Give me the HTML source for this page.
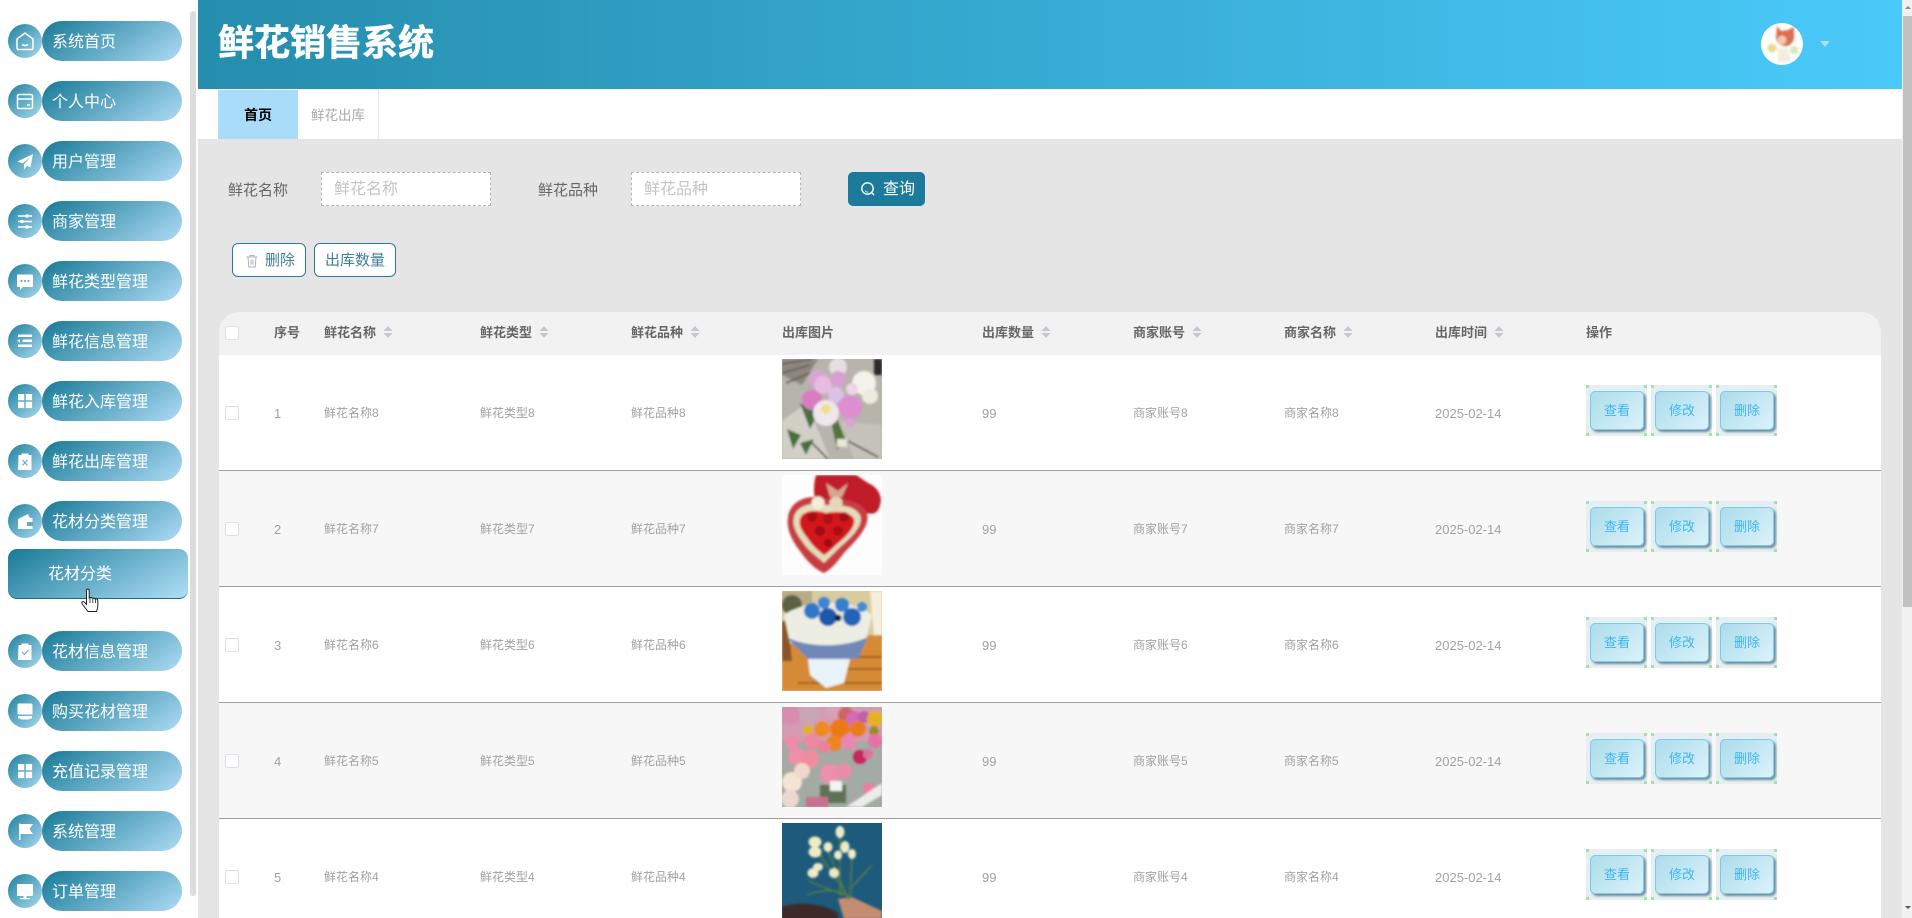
<!DOCTYPE html>
<html lang="zh"><head><meta charset="utf-8"><title>鲜花销售系统</title>
<style>
*{box-sizing:border-box;margin:0;padding:0}
html,body{width:1912px;height:918px;overflow:hidden;background:#fff;font-family:"Liberation Sans","Noto Sans CJK SC",sans-serif}
#root{position:relative;width:1912px;height:918px;overflow:hidden;background:#fff}
.a{position:absolute}
.ci{position:absolute;left:8px;width:34px;height:34px;border-radius:50%;background:linear-gradient(135deg,#20809c,#a8d8f0)}
.ci svg{display:block;width:34px;height:34px}
.p{position:absolute;left:42px;width:140px;height:40px;border-radius:20px;background:linear-gradient(145deg,#1f7f9b 5%,#a6d6f0 95%);color:#fff;font-size:16px;line-height:43px;padding-left:10px;white-space:nowrap;overflow:hidden}
.r{position:absolute;left:219px;width:1662px;height:116px;border-bottom:1px solid #a0a0a0;background:#fff;overflow:hidden}
.r.e{background:#f7f7f7}
.t{position:absolute;font-size:12px;line-height:117px;color:#a2a2a2;white-space:nowrap;top:0}
.n{font-size:13px}
.h{position:absolute;top:312px;font-size:13px;font-weight:bold;line-height:41px;color:#666;white-space:nowrap}
.s{position:absolute;top:325px;width:10px;height:14px}
.cb{position:absolute;width:14px;height:14px;border:1px solid #dcdfe6;background:#fff;border-radius:2px;left:6px;top:51px}
.o{position:absolute;top:30px;width:61px;height:51px;background:
linear-gradient(#9fe0b5,#9fe0b5) 0 0/3px 3px no-repeat,linear-gradient(#9fe0b5,#9fe0b5) 100% 0/3px 3px no-repeat,
linear-gradient(#9fe0b5,#9fe0b5) 0 100%/3px 3px no-repeat,linear-gradient(#9fe0b5,#9fe0b5) 100% 100%/3px 3px no-repeat,#e6eef1}
.o div{position:absolute;left:4px;top:6px;width:54px;height:39px;border-radius:5px;border:1px solid #74cdee;background:linear-gradient(135deg,#acdcec,#dcf2f9);box-shadow:2px 2px 2px #6f8c9b;color:#3fb6f0;font-size:13px;line-height:38px;text-align:center}
.im{position:absolute;left:563px;top:4px;width:100px;height:100px;overflow:hidden}
.im svg{display:block;width:100px;height:100px}
.b{filter:url(#bl)}
</style></head><body><div id="root">
<svg width="0" height="0" style="position:absolute"><defs><filter id="bl" x="-5%" y="-5%" width="110%" height="110%"><feGaussianBlur stdDeviation="1.1"/></filter>
<symbol id="sort" viewBox="0 0 10 14"><path d="M5 1 9.500 6H.5zM5 13 .5 8h9z" fill="#c4c7cd"/></symbol>
<symbol id="grid" viewBox="0 0 34 34"><path d="M10 10h6.300v6.300H10zM17.800 10h6.300v6.300h-6.300zM10 17.800h6.300v6.300H10zM17.800 17.800h6.300v6.300h-6.300z" fill="#fff"/></symbol>
</defs></svg>

<!-- sidebar -->
<div class="a" style="left:190px;top:11px;width:6px;height:885px;background:#dcdcde;border-radius:3px"></div>

<div class="ci" style="top:24px"><svg viewBox="0 0 34 34"><path d="M17 9 25 15V24a1.500 1.500 0 0 1-1.500 1.500h-13A1.500 1.500 0 0 1 9 24V15z" fill="none" stroke="#fff" stroke-width="1.500" stroke-linejoin="round"/><path d="M14 20.500q3 2 6 0" fill="none" stroke="#fff" stroke-width="1.500"/></svg></div><div class="p" style="top:21px">系统首页</div>
<div class="ci" style="top:84px"><svg viewBox="0 0 34 34"><rect x="9.500" y="10.500" width="15" height="14" rx="1.500" fill="none" stroke="#fff" stroke-width="1.500"/><path d="M9.500 15h15M19 21h3" stroke="#fff" stroke-width="1.500"/></svg></div><div class="p" style="top:81px">个人中心</div>
<div class="ci" style="top:144px"><svg viewBox="0 0 34 34"><path d="M25 10 9.500 17.500 14.500 19.500 22 13.500 16 20.500 16 25.500 19 22 22.500 23.500z" fill="#fff"/></svg></div><div class="p" style="top:141px">用户管理</div>
<div class="ci" style="top:204px"><svg viewBox="0 0 34 34"><path d="M10 12h14M10 17.500h14M10 23h14" stroke="#fff" stroke-width="1.500"/><circle cx="19" cy="12" r="1.800" fill="#fff"/><circle cx="14" cy="17.500" r="1.800" fill="#fff"/><circle cx="19" cy="23" r="1.800" fill="#fff"/></svg></div><div class="p" style="top:201px">商家管理</div>
<div class="ci" style="top:264px"><svg viewBox="0 0 34 34"><path d="M10 10.500h14a1 1 0 0 1 1 1V22a1 1 0 0 1-1 1H15l-3 3v-3h-2a1 1 0 0 1-1-1V11.500a1 1 0 0 1 1-1z" fill="#fff"/><circle cx="13.500" cy="17" r="1" fill="#4f9cb8"/><circle cx="17" cy="17" r="1" fill="#4f9cb8"/><circle cx="20.500" cy="17" r="1" fill="#4f9cb8"/></svg></div><div class="p" style="top:261px">鲜花类型管理</div>
<div class="ci" style="top:324px"><svg viewBox="0 0 34 34"><path d="M10 10.500h14v2.500H10zM14.500 15.500H24V18h-9.500zM10 20.500h14V23H10zM9 16.800l3-1.800v3.600z" fill="#fff"/></svg></div><div class="p" style="top:321px">鲜花信息管理</div>
<div class="ci" style="top:384px"><svg viewBox="0 0 34 34"><use href="#grid"/></svg></div><div class="p" style="top:381px">鲜花入库管理</div>
<div class="ci" style="top:444px"><svg viewBox="0 0 34 34"><path d="M10.500 11h3V9.500h7V11h3v15h-13.500z" fill="#fff"/><path d="M14.500 16l5 5.500M19.500 16l-5 5.500" stroke="#6aa6bf" stroke-width="1"/></svg></div><div class="p" style="top:441px">鲜花出库管理</div>
<div class="ci" style="top:504px"><svg viewBox="0 0 34 34"><path d="M10 15l10-5 2 4h2.500v11H10z" fill="#fff"/><path d="M19 18h6v4h-6z" fill="#6aa6bf"/></svg></div><div class="p" style="top:501px">花材分类管理</div>
<div class="a" style="left:8px;top:549px;width:180px;height:50px;border-radius:9px;background:linear-gradient(150deg,#1f7f9b 5%,#a8d9f2 95%);border-bottom:1px solid #1c6a84;color:#fff;font-size:16px;line-height:51px;padding-left:40px">花材分类</div>

<div class="ci" style="top:634px"><svg viewBox="0 0 34 34"><path d="M10.500 11h3V9.500h7V11h3v15h-13.500z" fill="#fff"/><path d="M14 18l2.500 2.500 4-4.500" fill="none" stroke="#6aa6bf" stroke-width="1"/></svg></div><div class="p" style="top:631px">花材信息管理</div>
<div class="ci" style="top:694px"><svg viewBox="0 0 34 34"><path d="M11 9.500h12a1.500 1.500 0 0 1 1.500 1.500v9.500h-15V11A1.500 1.500 0 0 1 11 9.500zM10 22h14v2.500h-14zM12.500 24h9v1.500h-9z" fill="#fff"/></svg></div><div class="p" style="top:691px">购买花材管理</div>
<div class="ci" style="top:754px"><svg viewBox="0 0 34 34"><use href="#grid"/></svg></div><div class="p" style="top:751px">充值记录管理</div>
<div class="ci" style="top:814px"><svg viewBox="0 0 34 34"><path d="M11 9.500h1.500V26H11zM12.500 10H25l-3.500 5 3.500 5H12.500z" fill="#fff"/></svg></div><div class="p" style="top:811px">系统管理</div>
<div class="ci" style="top:874px"><svg viewBox="0 0 34 34"><path d="M10 10h14a1 1 0 0 1 1 1v10a1 1 0 0 1-1 1H10a1 1 0 0 1-1-1V11a1 1 0 0 1 1-1zM15.500 22h3v2h3.500v1.300H12v-1.300h3.500z" fill="#fff"/></svg></div><div class="p" style="top:871px">订单管理</div>

<!-- cursor -->
<svg class="a" style="left:80px;top:588px" width="20" height="26" viewBox="0 0 20 26"><path d="M6.500 2.500c0-1.800 2.700-1.800 2.700 0V10l1-.4c.7-.3 1.500 0 1.800.5l1.300-.1c.7 0 1.200.3 1.500.8l1-.1c1.300 0 2 1 2 2.200V18c0 2.500-.6 3.500-1.300 5.500H8L3 17c-1-1.300-1.500-2.400-1-3 .6-.7 1.800-.5 2.500.3l2 2.200z" fill="#fff" stroke="#222" stroke-width="1"/><path d="M10 10v5M12.800 10v5M15.600 11v4" stroke="#222" stroke-width=".8"/></svg>

<!-- header -->
<div class="a" style="left:198px;top:0;width:1704px;height:89px;background:linear-gradient(90deg,#258dad,#4acafa)"></div>
<div class="a" style="left:218px;top:17px;font-size:36px;font-weight:bold;color:#fff;line-height:52px;white-space:nowrap;-webkit-text-stroke:.6px #fff">鲜花销售系统</div>
<svg class="a" style="left:1761px;top:23px" width="42" height="42" viewBox="0 0 42 42"><circle cx="21" cy="21" r="21" fill="#fff"/><g class="b"><path d="M16 3l4 5 7-1 6-3v8c1 5-3 11-8 11-6 0-10-4-10-9z" fill="#dc6e54"/><circle cx="21" cy="17" r="4.500" fill="#f4c8b0"/><circle cx="11" cy="25" r="4.500" fill="#ead896"/><path d="M16 25h11l3 14H17z" fill="#f2efe0"/><circle cx="33" cy="27" r="4" fill="#d8e6bc"/></g></svg>
<div class="a" style="left:1820px;top:41px;width:0;height:0;border-left:5px solid transparent;border-right:5px solid transparent;border-top:6px solid #abe2f9"></div>

<!-- tabs -->
<div class="a" style="left:218px;top:90px;width:80px;height:49px;background:#a9dcf9;color:#000;font-size:14px;font-weight:bold;text-align:center;line-height:50px">首页</div>
<div class="a" style="left:298px;top:89px;width:81px;height:50px;border-right:1px solid #e8e8e8;border-top:1px solid #f0f0f0;color:#aaa;font-size:13.500px;text-align:center;line-height:51px">鲜花出库</div>

<!-- content -->
<div class="a" style="left:198px;top:139px;width:1704px;height:779px;background:#e5e5e5"></div>
<div class="a" style="left:228px;top:180px;font-size:15px;line-height:22px;color:#666">鲜花名称</div>
<div class="a" style="left:321px;top:172px;width:170px;height:34px;background:#fff;border:1px dashed #b5b5b5;font-size:16px;color:#c4c4c4;line-height:33px;padding-left:12px">鲜花名称</div>
<div class="a" style="left:538px;top:180px;font-size:15px;line-height:22px;color:#666">鲜花品种</div>
<div class="a" style="left:631px;top:172px;width:170px;height:34px;background:#fff;border:1px dashed #b5b5b5;font-size:16px;color:#c4c4c4;line-height:33px;padding-left:12px">鲜花品种</div>
<div class="a" style="left:848px;top:172px;width:77px;height:34px;background:#1c7b9a;border-radius:5px;color:#fff;font-size:16px;line-height:36px;padding-left:35px">查询</div>
<svg class="a" style="left:860px;top:181px" width="16" height="16" viewBox="0 0 16 16"><circle cx="7.500" cy="7.500" r="5.700" fill="none" stroke="#fff" stroke-width="1.400"/><path d="M11.500 11.500l2.500 2.500" stroke="#fff" stroke-width="1.400"/><path d="M5 9.500a3.500 3.500 0 0 0 3.500 1.500" stroke="#cfe6ee" fill="none"/></svg>

<div class="a" style="left:232px;top:243px;width:74px;height:34px;border:1px solid #2a7b9a;border-radius:6px;background:#fff;color:#3f7f97;font-size:15px;line-height:33px;padding-left:32px">删除</div>
<svg class="a" style="left:245px;top:254px" width="14" height="14" viewBox="0 0 14 14"><path d="M1.500 3h11M5 3V1.500h4V3M3 3l.8 10h6.400L11 3M6 5.500v5M8 5.500v5" fill="none" stroke="#aab0bb" stroke-width="1"/></svg>
<div class="a" style="left:314px;top:243px;width:82px;height:34px;border:1px solid #2a7b9a;border-radius:6px;background:#fff;color:#3f7f97;font-size:15px;line-height:33px;text-align:center">出库数量</div>

<!-- table header -->
<div class="a" style="left:219px;top:312px;width:1662px;height:44px;background:#f2f2f2;border-radius:20px 20px 0 0"></div>
<div class="a" style="left:225px;top:326px;width:14px;height:14px;border:1px solid #dcdfe6;background:#fff;border-radius:2px"></div>
<div class="h" style="left:274px">序号</div>
<div class="h" style="left:324px">鲜花名称</div><svg class="s" style="left:383px"><use href="#sort"/></svg>
<div class="h" style="left:480px">鲜花类型</div><svg class="s" style="left:539px"><use href="#sort"/></svg>
<div class="h" style="left:631px">鲜花品种</div><svg class="s" style="left:690px"><use href="#sort"/></svg>
<div class="h" style="left:782px">出库图片</div>
<div class="h" style="left:982px">出库数量</div><svg class="s" style="left:1041px"><use href="#sort"/></svg>
<div class="h" style="left:1133px">商家账号</div><svg class="s" style="left:1192px"><use href="#sort"/></svg>
<div class="h" style="left:1284px">商家名称</div><svg class="s" style="left:1343px"><use href="#sort"/></svg>
<div class="h" style="left:1435px">出库时间</div><svg class="s" style="left:1494px"><use href="#sort"/></svg>
<div class="h" style="left:1586px">操作</div>

<!-- row 1 -->
<div class="r" style="top:355px"><div class="cb"></div>
<div class="t n" style="left:55px">1</div><div class="t" style="left:105px">鲜花名称8</div><div class="t" style="left:261px">鲜花类型8</div><div class="t" style="left:412px">鲜花品种8</div><div class="t n" style="left:763px">99</div><div class="t" style="left:914px">商家账号8</div><div class="t" style="left:1065px">商家名称8</div><div class="t n" style="left:1216px">2025-02-14</div>
<div class="im"><svg viewBox="0 0 100 100"><rect width="100" height="100" fill="#b7b4ac"/><g class="b"><path d="M0 0h36L20 26 0 16z" fill="#8c877f"/><path d="M0 5 30 0M0 14 28 6M4 24 28 14" stroke="#5f5b55" stroke-width="1.500"/><path d="M0 62 25 44 48 100H0z" fill="#d2cfc7"/><path d="M58 62 100 66V100H72z" fill="#c5c2ba"/><path d="M92 0h8v16h-8z" fill="#2a2a2a"/><path d="M28 82 46 100M66 82l30 16" stroke="#4e4e4c" stroke-width="1.600"/><path d="M55 60 65 85 55 90 50 66z" fill="#55733a"/><path d="M55 80h10v8H55z" fill="#e8e4d8"/><path d="M18 44 36 54 28 70zM5 70l14 6-8 14zM18 84l14-4-8 16z" fill="#46703e"/><circle cx="56" cy="8" r="9" fill="#e6dfe2"/><circle cx="36" cy="20" r="9" fill="#d8a4d6"/><circle cx="41" cy="26" r="9" fill="#e8bbe0"/><circle cx="56" cy="20" r="8" fill="#d99fd2"/><circle cx="30" cy="41" r="10" fill="#d97cc2"/><circle cx="54" cy="36" r="8" fill="#ddc0e8"/><circle cx="44" cy="54" r="13" fill="#f0e6ec"/><circle cx="44" cy="50" r="5" fill="#ece088"/><circle cx="68" cy="48" r="12" fill="#dd8ed0"/><circle cx="68" cy="64" r="5" fill="#dca4d0"/><circle cx="82" cy="24" r="12" fill="#f5f2ea"/><circle cx="88" cy="37" r="8" fill="#eeeade"/><circle cx="70" cy="30" r="6" fill="#ead8e4"/></g></svg></div>
<div class="o" style="left:1367px"><div>查看</div></div><div class="o" style="left:1432px"><div>修改</div></div><div class="o" style="left:1497px"><div>删除</div></div></div>

<!-- row 2 -->
<div class="r e" style="top:471px"><div class="cb"></div>
<div class="t n" style="left:55px">2</div><div class="t" style="left:105px">鲜花名称7</div><div class="t" style="left:261px">鲜花类型7</div><div class="t" style="left:412px">鲜花品种7</div><div class="t n" style="left:763px">99</div><div class="t" style="left:914px">商家账号7</div><div class="t" style="left:1065px">商家名称7</div><div class="t n" style="left:1216px">2025-02-14</div>
<div class="im"><svg viewBox="0 0 100 100"><rect width="100" height="100" fill="#fdfdfd"/><g class="b"><path d="M34 0H74L86 8C96 12 101 22 98 30 96 38 92 40 84 38H40C32 30 30 14 34 0z" fill="#c01e2c"/><path d="M6 42C8 26 26 18 44 24 58 24 76 24 84 36 90 48 78 62 62 78 56 86 50 94 42 98 36 96 26 88 18 76 10 66 4 54 6 42z" fill="#c83c42"/><path d="M12 42C14 32 28 26 44 30 58 30 72 30 78 40 82 50 70 62 58 72 52 78 46 84 42 88 36 82 26 76 20 66 14 58 10 50 12 42z" fill="#e4dcbc"/><path d="M18 44C20 36 32 34 44 38 54 36 68 36 72 44 74 52 64 62 54 70 50 74 46 78 42 80 36 76 30 70 26 64 20 56 16 50 18 44z" fill="#d2181f"/><circle cx="30" cy="42" r="5" fill="#a81016"/><circle cx="46" cy="44" r="5" fill="#b21018"/><circle cx="62" cy="42" r="5" fill="#a81016"/><circle cx="38" cy="56" r="5" fill="#a00c14"/><circle cx="56" cy="56" r="5" fill="#aa1016"/><circle cx="46" cy="68" r="4" fill="#9c0c14"/><circle cx="36" cy="28" r="6.500" fill="#f3eddc"/><circle cx="54" cy="28" r="6.500" fill="#e6d6bc"/><path d="M44 8 56 16 66 8 60 22H48z" fill="#d8a690"/></g></svg></div>
<div class="o" style="left:1367px"><div>查看</div></div><div class="o" style="left:1432px"><div>修改</div></div><div class="o" style="left:1497px"><div>删除</div></div></div>

<!-- row 3 -->
<div class="r" style="top:587px"><div class="cb"></div>
<div class="t n" style="left:55px">3</div><div class="t" style="left:105px">鲜花名称6</div><div class="t" style="left:261px">鲜花类型6</div><div class="t" style="left:412px">鲜花品种6</div><div class="t n" style="left:763px">99</div><div class="t" style="left:914px">商家账号6</div><div class="t" style="left:1065px">商家名称6</div><div class="t n" style="left:1216px">2025-02-14</div>
<div class="im"><svg viewBox="0 0 100 100"><rect width="100" height="100" fill="#d9cba0"/><g class="b"><path d="M88 0h12v46H92z" fill="#f4efdc"/><path d="M0 0h30v12L0 20z" fill="#b8ac86"/><circle cx="10" cy="14" r="10" fill="#5c6444"/><path d="M0 46 100 44V100H0z" fill="#d58a34"/><path d="M0 30h6l4 40H0z" fill="#8a5426"/><path d="M30 78h70M16 92h84M66 66h34" stroke="#8c5018" stroke-width="1.500"/><path d="M2 24C20 10 70 6 90 24L84 50 50 62 8 52z" fill="#eceee4"/><path d="M4 46C24 56 60 58 86 46L76 68H26z" fill="#6f88b8"/><path d="M26 68H68L62 92 44 97 28 84z" fill="#e9f4f8"/><circle cx="30" cy="20" r="8" fill="#2f78c8"/><circle cx="42" cy="12" r="6" fill="#3a86d0"/><circle cx="46" cy="26" r="9" fill="#1c58ac"/><circle cx="60" cy="14" r="7" fill="#3180d0"/><circle cx="70" cy="26" r="9" fill="#2264bb"/><circle cx="80" cy="16" r="5" fill="#3f8cd6"/><circle cx="56" cy="27" r="3.500" fill="#12203a"/></g></svg></div>
<div class="o" style="left:1367px"><div>查看</div></div><div class="o" style="left:1432px"><div>修改</div></div><div class="o" style="left:1497px"><div>删除</div></div></div>

<!-- row 4 -->
<div class="r e" style="top:703px"><div class="cb"></div>
<div class="t n" style="left:55px">4</div><div class="t" style="left:105px">鲜花名称5</div><div class="t" style="left:261px">鲜花类型5</div><div class="t" style="left:412px">鲜花品种5</div><div class="t n" style="left:763px">99</div><div class="t" style="left:914px">商家账号5</div><div class="t" style="left:1065px">商家名称5</div><div class="t n" style="left:1216px">2025-02-14</div>
<div class="im"><svg viewBox="0 0 100 100"><rect width="100" height="100" fill="#a4aaa4"/><g class="b"><rect width="100" height="34" fill="#d49cb0"/><circle cx="8" cy="8" r="10" fill="#d88cb0"/><circle cx="28" cy="8" r="11" fill="#c8a4b4"/><circle cx="52" cy="4" r="8" fill="#d8a0b4"/><circle cx="64" cy="8" r="8" fill="#d06464"/><circle cx="72" cy="12" r="8" fill="#d868b8"/><circle cx="82" cy="10" r="6" fill="#c060a8"/><circle cx="93" cy="12" r="8" fill="#e8b020"/><circle cx="26" cy="23" r="5" fill="#e2b020"/><circle cx="40" cy="22" r="8" fill="#ee8a20"/><circle cx="58" cy="22" r="10" fill="#ea7a18"/><circle cx="76" cy="22" r="8" fill="#e87c18"/><circle cx="92" cy="24" r="5" fill="#9a8a30"/><circle cx="52" cy="36" r="8" fill="#ee8420"/><circle cx="67" cy="35" r="8" fill="#e888b0"/><circle cx="93" cy="34" r="7" fill="#e870a8"/><circle cx="30" cy="34" r="8" fill="#ec88a0"/><circle cx="42" cy="40" r="6" fill="#ec8098"/><circle cx="10" cy="35" r="7" fill="#ee8ca8"/><circle cx="15" cy="50" r="9" fill="#ee90a8"/><circle cx="28" cy="52" r="9" fill="#f08ca0"/><circle cx="78" cy="50" r="7" fill="#c8285c"/><circle cx="86" cy="47" r="5" fill="#e070a0"/><circle cx="48" cy="67" r="10" fill="#ec90ac"/><circle cx="62" cy="64" r="8" fill="#ea8ca8"/><circle cx="10" cy="75" r="10" fill="#f4e4d4"/><circle cx="20" cy="64" r="8" fill="#f0d8cc"/><circle cx="8" cy="92" r="9" fill="#ecd8d0"/><path d="M38 78h26v18H38z" fill="#5e7254"/><path d="M48 74h12v10H48z" fill="#f4f4f4"/><circle cx="87" cy="82" r="6" fill="#f07ca0"/><path d="M64 100 100 76V88L80 100z" fill="#ececec"/><path d="M24 90h22v10H24z" fill="#c87090"/></g></svg></div>
<div class="o" style="left:1367px"><div>查看</div></div><div class="o" style="left:1432px"><div>修改</div></div><div class="o" style="left:1497px"><div>删除</div></div></div>

<!-- row 5 -->
<div class="r" style="top:819px;height:99px;border-bottom:0"><div class="cb"></div>
<div class="t n" style="left:55px">5</div><div class="t" style="left:105px">鲜花名称4</div><div class="t" style="left:261px">鲜花类型4</div><div class="t" style="left:412px">鲜花品种4</div><div class="t n" style="left:763px">99</div><div class="t" style="left:914px">商家账号4</div><div class="t" style="left:1065px">商家名称4</div><div class="t n" style="left:1216px">2025-02-14</div>
<div class="im"><svg viewBox="0 0 100 100"><rect width="100" height="100" fill="#1e5a7c"/><g class="b"><path d="M0 84C15 78 40 80 56 90V100H0z" fill="#3c2a26"/><path d="M56 76 70 74 100 88V96H62z" fill="#c48c70"/><path d="M33 25 68 76M46 28 66 76M58 12V72M70 34 68 74M68 66 90 42M25 72C40 66 55 66 65 72M26 58 62 72" stroke="#4f7a48" stroke-width="1.700" fill="none"/><g fill="#eeecc4"><ellipse cx="58" cy="9" rx="4.500" ry="6"/><ellipse cx="33" cy="19" rx="6.500" ry="5.500"/><ellipse cx="33" cy="29" rx="6.500" ry="5.500"/><ellipse cx="46" cy="24" rx="4.500" ry="5"/><ellipse cx="63" cy="24" rx="4.500" ry="6"/><ellipse cx="56" cy="32" rx="4" ry="4.500"/><ellipse cx="70" cy="31" rx="4" ry="5"/><ellipse cx="36" cy="44" rx="5" ry="4"/><ellipse cx="31" cy="50" rx="5.500" ry="5"/><ellipse cx="52" cy="50" rx="5" ry="5"/></g></g></svg></div>
<div class="o" style="left:1367px"><div>查看</div></div><div class="o" style="left:1432px"><div>修改</div></div><div class="o" style="left:1497px"><div>删除</div></div></div>

<!-- page scrollbar -->
<div class="a" style="left:1902px;top:0;width:10px;height:918px;background:#f1f1f1"></div>
<div class="a" style="left:1903px;top:16px;width:9px;height:591px;background:#c1c1c1"></div>
<div class="a" style="left:1905px;top:6px;width:0;height:0;border-left:3px solid transparent;border-right:3px solid transparent;border-bottom:3px solid #888"></div>
<div class="a" style="left:1905px;top:906px;width:0;height:0;border-left:3px solid transparent;border-right:3px solid transparent;border-top:3px solid #555"></div>
</div></body></html>
